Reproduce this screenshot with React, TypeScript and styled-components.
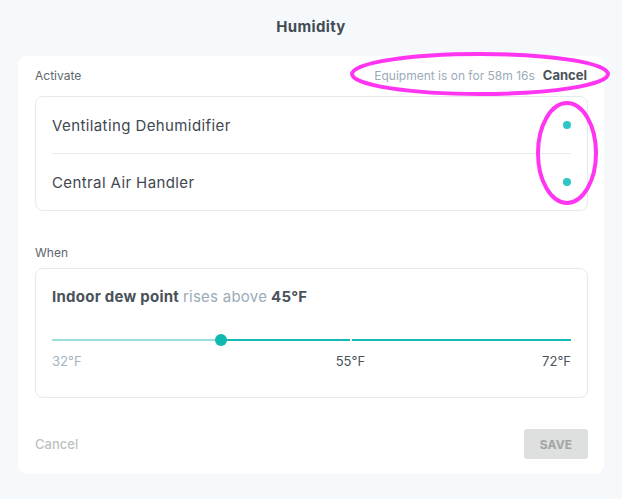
import styled, { createGlobalStyle } from "styled-components";

const GlobalStyle = createGlobalStyle`
  html, body {
    margin: 0;
    padding: 0;
    background: #f5f9fc;
  }
  body {
    font-family: Inter, "Noto Sans", sans-serif;
    -webkit-font-smoothing: antialiased;
  }
`;

const Page = styled.div`
  width: 622px;
  height: 499px;
  display: flex;
  flex-direction: column;
  align-items: center;
  box-sizing: border-box;
  padding-top: 16px;
`;

const Title = styled.h1`
  margin: 0;
  font-size: 15px;
  font-weight: 700;
  color: #434b53;
  line-height: 22px;
  letter-spacing: 0.35px;
`;

const Card = styled.div`
  position: relative;
  margin-top: 18px;
  width: 586px;
  box-sizing: border-box;
  background: #fff;
  border-radius: 9px;
  padding: 9px 16px 15px 17px;
`;

const SectionHeader = styled.div`
  display: flex;
  align-items: center;
  justify-content: space-between;
  height: 20px;
  margin-bottom: 11px;
`;

const Label = styled.span`
  font-size: 12px;
  color: #5d666e;
`;

const Status = styled.div`
  display: flex;
  align-items: baseline;
  gap: 8px;
  padding-right: 1px;
`;

const Timer = styled.span`
  font-size: 12px;
  color: #9aabb8;
`;

const LinkButton = styled.button<{ $muted?: boolean }>`
  border: 0;
  background: none;
  padding: 0;
  font-family: inherit;
  font-size: 13px;
  font-weight: ${(p) => (p.$muted ? 500 : 700)};
  color: ${(p) => (p.$muted ? "#bdbfc1" : "#4a525a")};
`;

const Box = styled.div`
  border: 1px solid #e4eaee;
  border-radius: 8px;
  padding: 0 16px;
`;

const EquipmentRow = styled.div`
  display: flex;
  align-items: center;
  justify-content: space-between;
  height: 56px;
  font-size: 15px;
  letter-spacing: 0.4px;
  color: #3f474f;
  & + & {
    border-top: 1px solid #e6ebef;
  }
`;

const Dot = styled.span`
  width: 8px;
  height: 8px;
  border-radius: 50%;
  background: #2cc6c6;
`;

const WhenHeader = styled(SectionHeader)`
  margin-top: 31px;
  margin-bottom: 6px;
`;

const Condition = styled.div`
  padding: 18px 0 0;
  font-size: 15px;
  line-height: 20px;
  letter-spacing: 0.25px;
  color: #4a525a;
  font-weight: 700;
`;

const Soft = styled.span`
  font-weight: 400;
  color: #9aabb8;
`;

const Slider = styled.div`
  position: relative;
  margin-top: 32px;
  height: 2px;
  display: flex;
`;

const Track = styled.div<{ $light?: boolean }>`
  height: 2px;
  background: ${(p) => (p.$light ? "#9ce0dd" : "#14b9b3")};
`;

const Thumb = styled.span`
  position: absolute;
  top: -5px;
  width: 12px;
  height: 12px;
  border-radius: 50%;
  background: #10b8b0;
  transform: translateX(-6px);
`;

const Tick = styled.span`
  position: absolute;
  top: 0;
  width: 2px;
  height: 2px;
  background: #fff;
`;

const Scale = styled.div`
  position: relative;
  display: flex;
  justify-content: space-between;
  margin-top: 12px;
  padding-bottom: 28px;
  font-size: 13px;
  line-height: 16px;
`;

const ScaleMark = styled.span<{ $dim?: boolean }>`
  color: ${(p) => (p.$dim ? "#a3b3bf" : "#4a525a")};
`;

const MidMark = styled(ScaleMark)`
  position: absolute;
  top: 0;
  transform: translateX(-50%);
`;

const Footer = styled.div`
  display: flex;
  align-items: center;
  justify-content: space-between;
  margin-top: 31px;
`;

const SaveButton = styled.button`
  width: 64px;
  height: 30px;
  border: 0;
  border-radius: 3px;
  background: #dedfdf;
  color: #a3a4a5;
  font-family: inherit;
  font-size: 12px;
  font-weight: 700;
  letter-spacing: 0.2px;
`;

const Markup = styled.svg`
  position: absolute;
  left: 0;
  top: 0;
  width: 100%;
  height: 100%;
  pointer-events: none;
  overflow: visible;
`;

// slider range and current value
const MIN = 32;
const MAX = 72;
const MID = 55;
const VALUE = 45;
const TRACK_WIDTH = 519;

export default function App() {
  const pct = ((VALUE - MIN) / (MAX - MIN)) * 100;
  const midPct = ((MID - MIN) / (MAX - MIN)) * 100;

  return (
    <>
      <GlobalStyle />
      <Page>
        <Title>Humidity</Title>
        <Card>
          <SectionHeader>
            <Label>Activate</Label>
            <Status>
              <Timer>Equipment is on for 58m 16s</Timer>
              <LinkButton>Cancel</LinkButton>
            </Status>
          </SectionHeader>
          <Box>
            <EquipmentRow>
              Ventilating Dehumidifier
              <Dot />
            </EquipmentRow>
            <EquipmentRow>
              Central Air Handler
              <Dot />
            </EquipmentRow>
          </Box>

          <WhenHeader>
            <Label>When</Label>
          </WhenHeader>
          <Box>
            <Condition>
              Indoor dew point <Soft>rises above</Soft> 45°F
            </Condition>
            <Slider style={{ width: TRACK_WIDTH }}>
              <Track $light style={{ width: `${pct}%` }} />
              <Track style={{ flex: 1 }} />
              <Tick style={{ left: `${midPct}%` }} />
              <Thumb style={{ left: `${pct}%` }} />
            </Slider>
            <Scale style={{ width: TRACK_WIDTH }}>
              <ScaleMark $dim>{MIN}°F</ScaleMark>
              <MidMark style={{ left: `${midPct}%` }}>{MID}°F</MidMark>
              <ScaleMark>{MAX}°F</ScaleMark>
            </Scale>
          </Box>

          <Footer>
            <LinkButton $muted>Cancel</LinkButton>
            <SaveButton>SAVE</SaveButton>
          </Footer>

          <Markup>
            <ellipse cx="462" cy="18" rx="128" ry="20" fill="none" stroke="#ff35f2" strokeWidth="4" />
            <ellipse cx="549" cy="97" rx="29" ry="50" fill="none" stroke="#ff35f2" strokeWidth="4" />
          </Markup>
        </Card>
      </Page>
    </>
  );
}
